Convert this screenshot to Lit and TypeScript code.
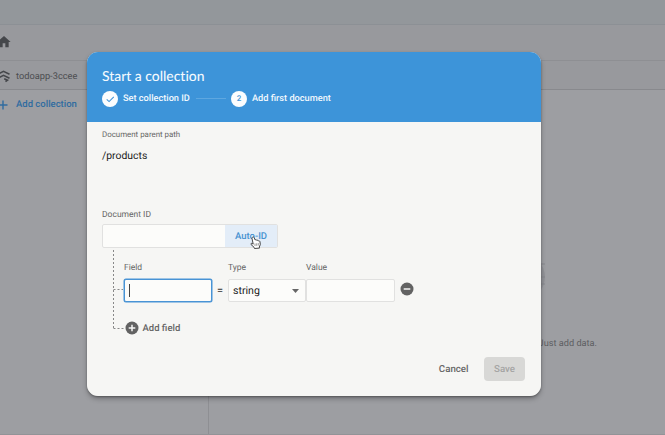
import { LitElement, html, css, svg } from "lit";
import { customElement } from "lit/decorators.js";

const homeIcon = html`<svg width="16" height="16" viewBox="0 0 24 24" fill="#45474b"><path d="M10 20v-6h4v6h5v-8h3L12 3 2 12h3v8z"/></svg>`;
const dbIcon = html`<svg width="14" height="14" viewBox="0 0 14 14" fill="none" stroke="#45474b" stroke-width="1.6"><path d="M1 5.1 6.5 2.3l6 2.9M1 9.2 6.5 6.3l6 2.9M7.2 9.7l3.3 1.5-2 1.5"/></svg>`;
const plusIcon = html`<svg width="10" height="10" viewBox="0 0 10 10" stroke="#306ca0" stroke-width="1.4"><path d="M5 .5v9M.5 5h9"/></svg>`;
const checkIcon = html`<svg width="16" height="16" viewBox="0 0 16 16" fill="none" stroke="#4595d6" stroke-width="1.1"><path d="M4.7 8.3l2.4 2.3 4.7-4.8"/></svg>`;
const circleIcon = (plus: boolean) => html`<svg width="14" height="14" viewBox="0 0 14 14"><circle cx="7" cy="7" r="6.5" fill="#626262"/><path d="M3.7 7h6.6" stroke="#f6f6f4" stroke-width="1.5"/>${plus ? svg`<path d="M7 3.7v6.6" stroke="#f6f6f4" stroke-width="1.5"/>` : ""}</svg>`;

@customElement("app-root")
export class AppRoot extends LitElement {
  static styles = css`
    :host { display: block; position: relative; width: 665px; height: 435px; overflow: hidden; background: #9d9ea2; font-family: Roboto, sans-serif; font-size: 9.5px; color: #666; text-rendering: geometricPrecision; }
    * { box-sizing: border-box; }
    svg { display: block; flex: none; }
    .page { display: flex; flex-direction: column; height: 435px; color: #4c4d50; border-bottom: 1px solid #929397; }
    .top { height: 25px; background: #93979b; border-bottom: 1px solid #8c9095; }
    .home { height: 36px; background: #98999d; border-bottom: 1px solid #8e8f93; display: flex; align-items: center; }
    .home svg { margin-left: -4px; margin-top: -1px; }
    .path { height: 29px; background: #98999d; border-bottom: 1px solid #88898d; display: flex; align-items: center; font-size: 9.25px; padding-top: 2px; }
    .path svg { margin-left: -3px; margin-right: 5px; }
    .main { flex: 1; display: flex; }
    .side { width: 209px; border-right: 1px solid #8e8f93; }
    .add { display: flex; align-items: center; height: 29px; color: #306ca0; font-weight: 500; }
    .add svg { margin-left: -2px; margin-right: 8px; }
    .empty { flex: 1; display: flex; flex-direction: column; align-items: flex-end; padding: 164px 68px 0 0; font-size: 9.2px; color: #5d5e62; }
    .globe { margin: 0 52px 38px 0; }
    .dialog { position: absolute; left: 87px; top: 52px; width: 454px; height: 344px; border-radius: 11px; overflow: hidden; background: #f6f6f4; display: flex; flex-direction: column; }
    .shadow { position: absolute; left: 87px; top: 52px; width: 454px; height: 344px; border-radius: 11px; box-shadow: 0 3px 5px rgba(0,0,0,.25), 0 1px 2px rgba(0,0,0,.3); }
    .head { height: 70px; background: #3d94d9; color: #f3f9fe; padding: 14px 15px 0; }
    h1 { margin: 0; font: 500 13.9px/19px Lato, sans-serif; font-variant-ligatures: none; height: 24.5px; }
    .steps { display: flex; align-items: center; height: 16px; font-weight: 500; font-size: 9.2px; white-space: nowrap; }
    .steps .t1 { width: 68px; }
    .dot { width: 16px; height: 16px; border-radius: 50%; background: #fbfdfe; color: #4595d6; font-size: 8px; display: flex; align-items: center; justify-content: center; margin-right: 5px; flex: none; }
    .line { width: 30px; height: 1px; background: #5ea7e0; margin: 0 5px; }
    .body { flex: 1; padding: 6px 15px 0; display: flex; flex-direction: column; }
    .lab { font-size: 8.5px; line-height: 13px; white-space: nowrap; }
    .parent { font-size: 7.9px; }
    .val { font-size: 10.4px; line-height: 16px; color: #222; margin-top: 7px; height: 60px; }
    .docid { position: relative; top: 1px; }
    .doc { display: flex; width: 176px; height: 24px; border: 1px solid #e1e1e0; border-radius: 2px; background: #fcfcfa; margin-top: 3px; }
    .auto { margin-left: auto; width: 52px; background: #e3edf8; color: #4892d1; font-weight: 500; display: flex; align-items: center; justify-content: center; }
    .tree { position: relative; margin-left: 11px; padding: 13px 0 0 11px; height: 95px; }
    .dots { position: absolute; left: 0; top: 2px; }
    .fields { display: grid; grid-template-columns: 88px 16px 78px 89px 20px; grid-template-rows: 18px 23px; align-items: center; }
    .fields .lab { align-self: start; padding-top: 1px; }
    .box { height: 23px; border: 1px solid #e1e1e0; border-radius: 2px; background: #fcfcfa; display: flex; align-items: center; font-size: 10.6px; color: #222; }
    .focus { box-shadow: 0 0 0 .5px #4893d5; border-color: #4893d5; padding-left: 4px; }
    .caret { width: 1px; height: 13px; background: #444; }
    .eq { text-align: center; color: #333; font-size: 11px; }
    .sel { padding: 0 6px 0 4px; justify-content: space-between; }
    .minus { padding-left: 5px; margin-top: -3px; }
    .addf { display: flex; align-items: center; gap: 3.5px; font-weight: 500; height: 14px; margin: 19px 0 0 1px; }
    .foot { margin-top: 14px; display: flex; justify-content: flex-end; align-items: center; gap: 15.5px; font-weight: 500; font-size: 9.7px; padding-right: 1px; }
    .save { width: 41px; height: 24px; border-radius: 4px; background: #d8d8d6; color: #a5a5a4; display: flex; align-items: center; justify-content: center; }
    .cursor { position: absolute; left: 250px; top: 236px; }
  `;

  render() {
    return html`
      <div class="page">
        <div class="top"></div>
        <div class="home">${homeIcon}</div>
        <div class="path">${dbIcon}<span>todoapp-3ccee</span></div>
        <div class="main">
          <div class="side"><div class="add">${plusIcon}<span>Add collection</span></div></div>
          <div class="empty">
            <svg class="globe" width="46" height="46" viewBox="0 0 46 46"><circle cx="23" cy="23" r="23" fill="#909196"/><path d="M0 10h46M0 23h46M0 30h46" stroke="#86878c"/></svg>
            <span>Just add data.</span>
          </div>
        </div>
      </div>
      <div class="shadow"></div>
      <div class="dialog">
        <div class="head">
          <h1>Start a collection</h1>
          <div class="steps">
            <span class="dot">${checkIcon}</span><span class="t1">Set collection ID</span><span class="line"></span>
            <span class="dot">2</span><span>Add first document</span>
          </div>
        </div>
        <div class="body">
          <div class="lab parent">Document parent path</div>
          <div class="val">/products</div>
          <div class="lab docid">Document ID</div>
          <div class="doc"><span class="auto">Auto-ID</span></div>
          <div class="tree">
            <svg class="dots" width="12" height="80" viewBox="0 0 12 80" fill="none" stroke="#888" stroke-dasharray="2 2"><path d="M.5 0v79.5M.5 39.5H10M.5 78.5H12"/></svg>
            <div class="fields">
              <span class="lab">Field</span><span></span><span class="lab">Type</span><span class="lab">Value</span><span></span>
              <div class="box focus"><span class="caret"></span></div><span class="eq">=</span>
              <div class="box sel"><span>string</span><svg width="7" height="4" viewBox="0 0 7 4"><path d="M0 0h7L3.5 4z" fill="#666"/></svg></div>
              <div class="box"></div><span class="minus">${circleIcon(false)}</span>
            </div>
            <div class="addf">${circleIcon(true)}<span>Add field</span></div>
          </div>
          <div class="foot"><span>Cancel</span><span class="save">Save</span></div>
        </div>
      </div>
      <svg class="cursor" width="11" height="13" viewBox="0 0 11 13"><path d="M2.5 1.2c.9-.6 1.5 0 1.8.7l.8 2c1-.5 1.6 0 1.8.5.8-.4 1.4 0 1.6.5 1-.2 1.4.3 1.5 1l.3 2.6-1 2.6.2 1-5 .4-.4-1.2L1 8.5c-.4-.9.3-1.4 1.1-1l1.1.6L2 2.5c-.1-.5 0-1 .5-1.3z" fill="#fff" stroke="#333" stroke-width=".9"/><path d="M5 7.5v2.5M6.7 7.3v2.5M8.3 7.1v2.4" stroke="#555" stroke-width=".6"/></svg>
    `;
  }
}
